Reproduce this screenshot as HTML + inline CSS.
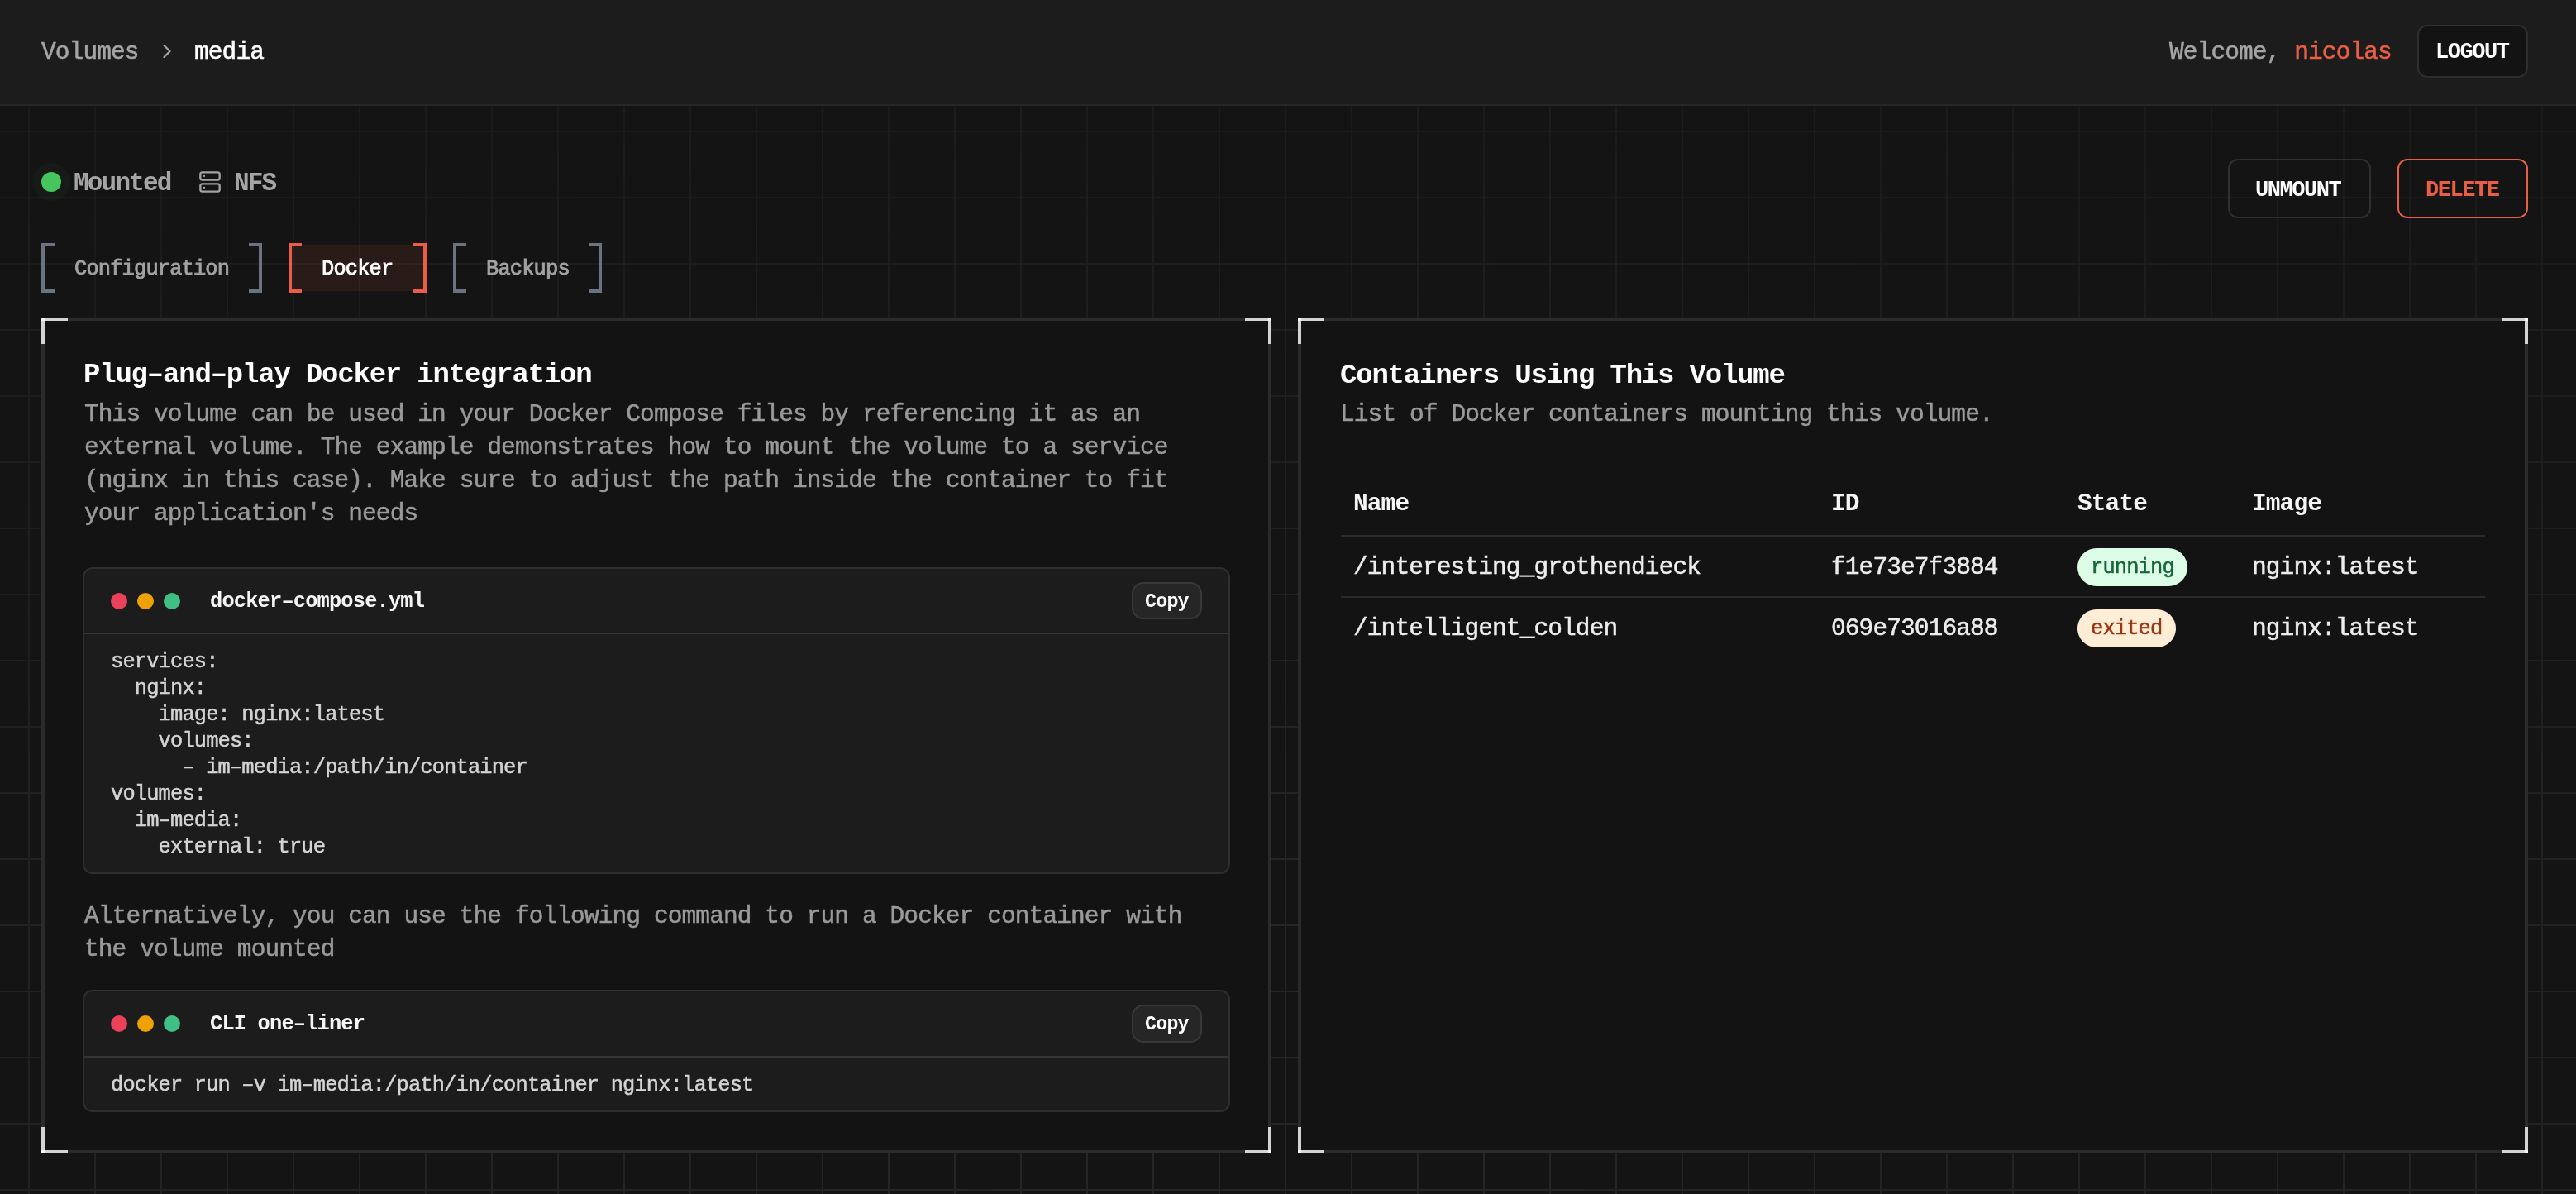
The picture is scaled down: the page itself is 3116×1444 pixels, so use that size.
<!DOCTYPE html>
<html><head><meta charset="utf-8">
<style>
*{margin:0;padding:0;box-sizing:border-box}
html,body{width:3116px;height:1444px;overflow:hidden;background:#141414}
body{position:relative;font-family:"Liberation Mono",monospace;color:#e5e5e5}
.a{position:absolute;white-space:pre;will-change:transform}
@media (max-width:2000px){html{zoom:0.5}}
.grid{position:absolute;left:0;top:128px;width:3116px;height:1316px;
 background-image:linear-gradient(to right,#262626 0,#262626 2px,transparent 2px),linear-gradient(to bottom,#262626 0,#262626 2px,transparent 2px);
 background-size:80px 80px;background-position:34px 30px;
 -webkit-mask-image:linear-gradient(to bottom,rgba(0,0,0,0.45) 0px,rgba(0,0,0,1) 1000px),linear-gradient(to right,rgba(0,0,0,0.82),#000 50%,rgba(0,0,0,0.82));-webkit-mask-composite:source-in;
 mask-image:linear-gradient(to bottom,rgba(0,0,0,0.45) 0px,rgba(0,0,0,1) 1000px),linear-gradient(to right,rgba(0,0,0,0.82),#000 50%,rgba(0,0,0,0.82));mask-composite:intersect}
.hdr{position:absolute;left:0;top:0;width:3116px;height:128px;background:#1c1c1c;border-bottom:2px solid #272727}
.f28{font-size:29.5px;letter-spacing:-0.9px;line-height:1}
.f24{font-size:25.4px;letter-spacing:-0.84px;line-height:1}
.rg{-webkit-text-stroke:0.5px currentColor}
.b{font-weight:bold}
.md{-webkit-text-stroke:0.8px currentColor}
.btn{position:absolute;border:2px solid #2e2e2e;border-radius:12px;background:#131313}
.card{position:absolute;top:384px;width:1488px;height:1011px;border:4px solid #2b2b2b;background:#131313}
.cn{position:absolute;background:rgba(255,255,255,0.8)}
.tb{position:absolute;width:16px;height:60px;top:294px;border:4px solid #6b7280}
.tl{border-right:none}.tr{border-left:none}
.code{position:absolute;left:100px;width:1388px;border:2px solid #2e2e2e;border-radius:12px;background:#1c1c1c;overflow:hidden}
.code .hd{position:absolute;left:0;top:0;width:100%;height:79px;border-bottom:2px solid #353535}
.dot{position:absolute;width:20px;height:20px;border-radius:50%}
.copy{position:absolute;width:85px;height:45px;border:2px solid #383838;border-radius:14px;background:#262626}
.badge{position:absolute;border-radius:23px;height:46px}
.hl{position:absolute;height:2px;background:#2b2b2b}
</style></head><body>
<div class="grid"></div>
<div class="hdr"></div>

<!-- header -->
<div class="a f28 rg" style="left:50px;top:49px;color:#a5a5a5">Volumes</div>
<svg class="a" style="left:188px;top:48px" width="28" height="28" viewBox="0 0 24 24" fill="none" stroke="#a3a3a3" stroke-width="2" stroke-linecap="round" stroke-linejoin="round"><path d="m9 18 6-6-6-6"/></svg>
<div class="a f28 rg" style="left:235px;top:49px;color:#ffffff">media</div>
<div class="a f28 rg" style="left:2624px;top:49px;color:#a5a5a5">Welcome, <span style="color:#eb5e46">nicolas</span></div>
<div class="btn" style="left:2924px;top:30px;width:134px;height:64px"></div>
<div class="a b" style="left:2946px;top:50px;color:#fff;font-size:27px;letter-spacing:-1.45px;line-height:1">LOGOUT</div>

<!-- status -->
<div class="a" style="left:39px;top:197px;width:46px;height:46px;border-radius:50%;background:rgba(69,197,91,0.04)"></div>
<div class="a" style="left:50px;top:208px;width:24px;height:24px;border-radius:50%;background:#45c55b"></div>
<div class="a b" style="left:89px;top:206px;color:#a5a5a5;font-size:31px;letter-spacing:-1.8px;line-height:1">Mounted</div>
<svg class="a" style="left:240px;top:206px" width="28" height="28" viewBox="0 0 24 24" fill="none" stroke="#a3a3a3" stroke-width="2" stroke-linecap="round" stroke-linejoin="round"><rect width="20" height="8" x="2" y="2" rx="2" ry="2"/><rect width="20" height="8" x="2" y="14" rx="2" ry="2"/><line x1="6" x2="6.01" y1="6" y2="6"/><line x1="6" x2="6.01" y1="18" y2="18"/></svg>
<div class="a b" style="left:283px;top:206px;color:#a5a5a5;font-size:31px;letter-spacing:-1.8px;line-height:1">NFS</div>

<!-- action buttons -->
<div class="btn" style="left:2695px;top:192px;width:173px;height:72px;border-color:#2f2f2f;background:transparent"></div>
<div class="a b" style="left:2728px;top:217px;color:#fff;font-size:27px;letter-spacing:-1.45px;line-height:1">UNMOUNT</div>
<div class="btn" style="left:2900px;top:192px;width:158px;height:72px;border-color:#eb5e46;background:transparent"></div>
<div class="a b" style="left:2934px;top:217px;color:#eb5e46;font-size:27px;letter-spacing:-1.45px;line-height:1">DELETE</div>

<!-- tabs -->
<div class="tb tl" style="left:50px"></div><div class="tb tr" style="left:301px"></div>
<div class="a f24 md" style="left:90px;top:313px;color:#a3a3a3">Configuration</div>
<div class="a" style="left:353px;top:296px;width:159px;height:56px;background:rgba(235,94,70,0.1)"></div>
<div class="tb tl" style="left:349px;border-color:#eb5e46"></div><div class="tb tr" style="left:500px;border-color:#eb5e46"></div>
<div class="a f24 md" style="left:389px;top:313px;color:#fff">Docker</div>
<div class="tb tl" style="left:548px"></div><div class="tb tr" style="left:712px"></div>
<div class="a f24 md" style="left:588px;top:313px;color:#a3a3a3">Backups</div>

<!-- cards -->
<div class="card" style="left:50px"></div>
<div class="card" style="left:1570px"></div>
<div class="cn" style="left:50px;top:384px;width:32px;height:4px"></div>
<div class="cn" style="left:50px;top:384px;width:4px;height:32px"></div>
<div class="cn" style="left:1506px;top:384px;width:32px;height:4px"></div>
<div class="cn" style="left:1534px;top:384px;width:4px;height:32px"></div>
<div class="cn" style="left:50px;top:1391px;width:32px;height:4px"></div>
<div class="cn" style="left:50px;top:1363px;width:4px;height:32px"></div>
<div class="cn" style="left:1506px;top:1391px;width:32px;height:4px"></div>
<div class="cn" style="left:1534px;top:1363px;width:4px;height:32px"></div>
<div class="cn" style="left:1570px;top:384px;width:32px;height:4px"></div>
<div class="cn" style="left:1570px;top:384px;width:4px;height:32px"></div>
<div class="cn" style="left:3026px;top:384px;width:32px;height:4px"></div>
<div class="cn" style="left:3054px;top:384px;width:4px;height:32px"></div>
<div class="cn" style="left:1570px;top:1391px;width:32px;height:4px"></div>
<div class="cn" style="left:1570px;top:1363px;width:4px;height:32px"></div>
<div class="cn" style="left:3026px;top:1391px;width:32px;height:4px"></div>
<div class="cn" style="left:3054px;top:1363px;width:4px;height:32px"></div>

<!-- left card content -->
<div class="a b" style="left:101px;top:436px;color:#fff;font-size:34px;letter-spacing:-1.2px;line-height:1">Plug&#8211;and&#8211;play Docker integration</div>
<div class="a f28 rg" style="left:102px;top:481px;color:#9a9a9a;line-height:40px">This volume can be used in your Docker Compose files by referencing it as an
external volume. The example demonstrates how to mount the volume to a service
(nginx in this case). Make sure to adjust the path inside the container to fit
your application's needs</div>

<div class="code" style="top:686px;height:371px">
 <div class="hd"></div>
</div>
<div class="dot" style="left:134px;top:717px;background:#eb4159"></div>
<div class="dot" style="left:166px;top:717px;background:#efa102"></div>
<div class="dot" style="left:198px;top:717px;background:#3fbe86"></div>
<div class="a f24 b" style="left:254px;top:715px;color:#f5f5f5">docker&#8211;compose.yml</div>
<div class="copy" style="left:1369px;top:704px"></div>
<div class="a b" style="left:1385px;top:717px;color:#fff;font-size:23.3px;letter-spacing:-0.78px;line-height:1">Copy</div>
<div class="a f24 rg" style="left:134px;top:785px;color:#d4d4d4;line-height:32px">services:
  nginx:
    image: nginx:latest
    volumes:
      &#8211; im&#8211;media:/path/in/container
volumes:
  im&#8211;media:
    external: true</div>

<div class="a f28 rg" style="left:102px;top:1088px;color:#9a9a9a;line-height:40px">Alternatively, you can use the following command to run a Docker container with
the volume mounted</div>

<div class="code" style="top:1197px;height:148px">
 <div class="hd" style="height:80px"></div>
</div>
<div class="dot" style="left:134px;top:1228px;background:#eb4159"></div>
<div class="dot" style="left:166px;top:1228px;background:#efa102"></div>
<div class="dot" style="left:198px;top:1228px;background:#3fbe86"></div>
<div class="a f24 b" style="left:254px;top:1226px;color:#f5f5f5">CLI one&#8211;liner</div>
<div class="copy" style="left:1369px;top:1215px;height:46px"></div>
<div class="a b" style="left:1385px;top:1228px;color:#fff;font-size:23.3px;letter-spacing:-0.78px;line-height:1">Copy</div>
<div class="a f24 rg" style="left:134px;top:1297px;color:#d4d4d4;line-height:32px">docker run &#8211;v im&#8211;media:/path/in/container nginx:latest</div>

<!-- right card content -->
<div class="a b" style="left:1621px;top:437px;color:#fff;font-size:34px;letter-spacing:-1.2px;line-height:1">Containers Using This Volume</div>
<div class="a f28 rg" style="left:1621px;top:487px;color:#9a9a9a">List of Docker containers mounting this volume.</div>

<div class="a f28 b" style="left:1637px;top:595px;color:#f5f5f5">Name</div>
<div class="a f28 b" style="left:2215px;top:595px;color:#f5f5f5">ID</div>
<div class="a f28 b" style="left:2513px;top:595px;color:#f5f5f5">State</div>
<div class="a f28 b" style="left:2724px;top:595px;color:#f5f5f5">Image</div>
<div class="hl" style="left:1622px;top:647px;width:1384px"></div>
<div class="a f28 rg" style="left:1637px;top:672px;color:#ededed">/interesting_grothendieck</div>
<div class="a f28 rg" style="left:2215px;top:672px;color:#ededed">f1e73e7f3884</div>
<div class="badge" style="left:2513px;top:663px;width:133px;background:#dcfce7"></div>
<div class="a f24 rg" style="left:2529px;top:674px;color:#166534">running</div>
<div class="a f28 rg" style="left:2724px;top:672px;color:#ededed">nginx:latest</div>
<div class="hl" style="left:1622px;top:721px;width:1384px"></div>
<div class="a f28 rg" style="left:1637px;top:746px;color:#ededed">/intelligent_colden</div>
<div class="a f28 rg" style="left:2215px;top:746px;color:#ededed">069e73016a88</div>
<div class="badge" style="left:2513px;top:737px;width:119px;background:#ffedd5"></div>
<div class="a f24 rg" style="left:2529px;top:748px;color:#9a3412">exited</div>
<div class="a f28 rg" style="left:2724px;top:746px;color:#ededed">nginx:latest</div>

</body></html>
